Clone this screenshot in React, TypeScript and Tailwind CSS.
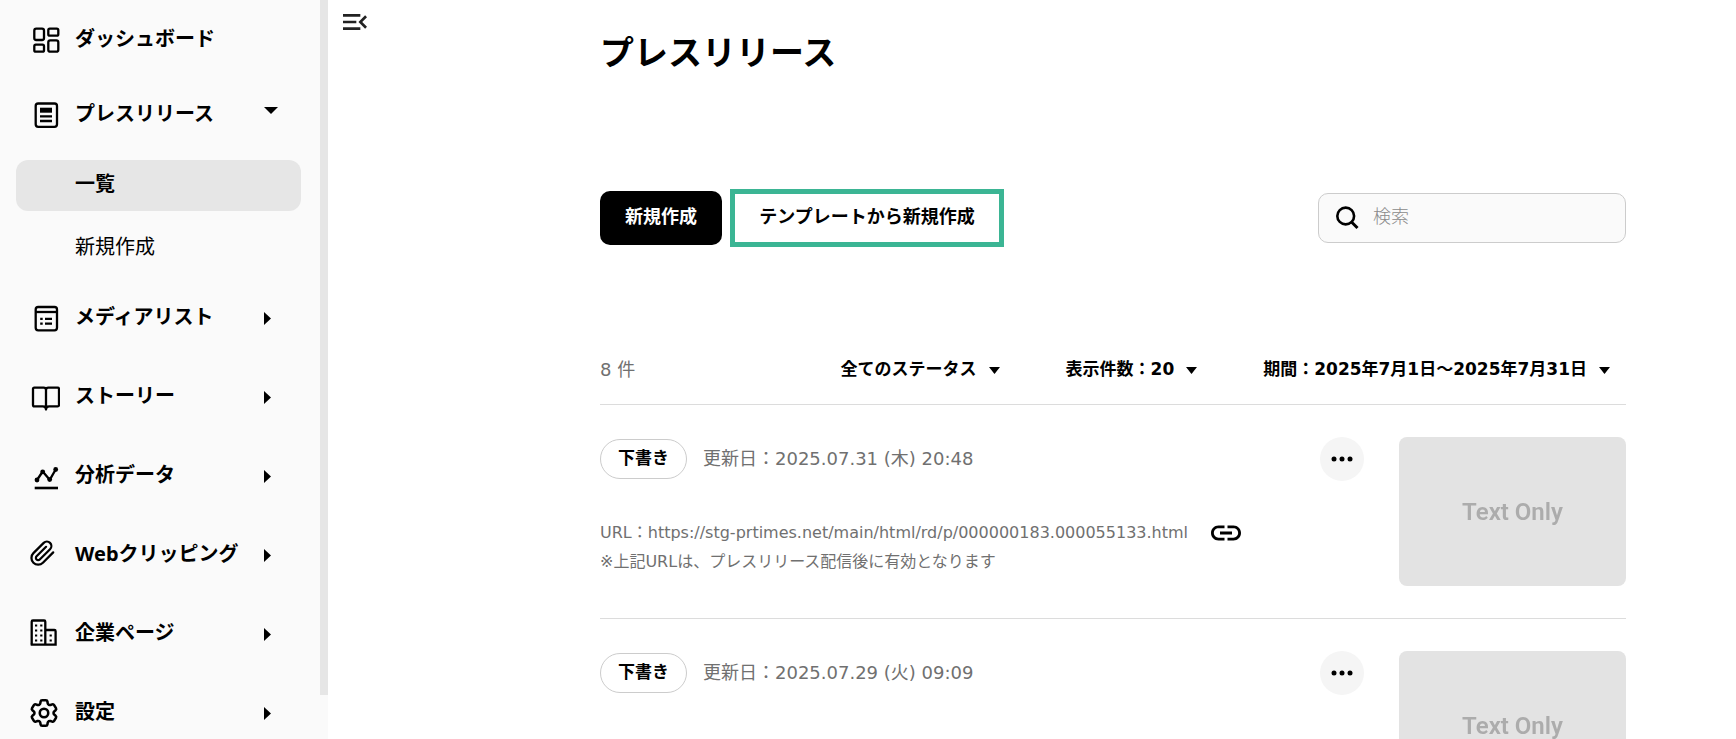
import { useState } from "react";
import type { ReactNode } from "react";
import { MdLink, MdMenuOpen } from "react-icons/md";
import { HiOutlineCog6Tooth } from "react-icons/hi2";

type NavItem = {
  label: string;
  icon: ReactNode;
};

type Release = {
  id: number;
  status: string;
  updatedAt: string;
  url?: string;
};

const releases: Release[] = [
  {
    id: 1,
    status: "下書き",
    updatedAt: "2025.07.31 (木) 20:48",
    url: "https://stg-prtimes.net/main/html/rd/p/000000183.000055133.html",
  },
  {
    id: 2,
    status: "下書き",
    updatedAt: "2025.07.29 (火) 09:09",
  },
];

const Icon = ({ children }: { children: ReactNode }) => (
  <svg
    className="h-8 w-8 shrink-0"
    viewBox="0 0 32 32"
    fill="none"
    stroke="currentColor"
    strokeWidth="2.3"
    aria-hidden="true"
  >
    {children}
  </svg>
);

const DashboardIcon = () => (
  <Icon>
    <rect x="6.3" y="4.7" width="9.7" height="11.3" rx="2" />
    <rect x="20.3" y="4.7" width="10" height="7" rx="1.5" />
    <rect x="6.3" y="20.7" width="9.7" height="7" rx="1.5" />
    <rect x="20.3" y="16.3" width="10" height="11.4" rx="2" />
  </Icon>
);

const ReleaseIcon = () => (
  <Icon>
    <rect x="7.7" y="4.5" width="21.3" height="23.3" rx="2.5" />
    <path d="M12 11.2h12" strokeWidth="5" />
    <path d="M12 17.3h12M12 22h12" />
  </Icon>
);

const MediaIcon = () => (
  <Icon>
    <rect x="7.7" y="4" width="21.3" height="23.3" rx="2.5" />
    <path d="M7.7 9h21.3" />
    <path d="M12.2 15.8h2.5M12.2 20.6h2.5M17 15.8h7M17 20.6h7" />
  </Icon>
);

const StoryIcon = () => (
  <Icon>
    <path
      d="M18 27.5V8c0-1.5-1-2.3-2.4-2.3H6.4c-.8 0-1.4.6-1.4 1.4V23c0 .8.6 1.4 1.4 1.4h8.4c1.8 0 3.2 1.2 3.2 3.1 0-1.9 1.4-3.1 3.2-3.1h8.4c.8 0 1.4-.6 1.4-1.4V7.1c0-.8-.6-1.4-1.4-1.4h-9.2C19 5.7 18 6.5 18 8"
      strokeLinecap="round"
      strokeLinejoin="round"
    />
  </Icon>
);

const AnalyticsIcon = () => (
  <Icon>
    <path d="M9 19l5.7-8.5 7 8.3 6-10.3" strokeLinejoin="round" />
    <g fill="currentColor" stroke="none">
      <circle cx="9" cy="19" r="2.4" />
      <circle cx="14.7" cy="10.8" r="2.4" />
      <circle cx="21.7" cy="18.6" r="2.4" />
      <circle cx="27.7" cy="8.5" r="2.4" />
    </g>
    <path d="M6.7 27h23.3" strokeWidth="2.6" />
  </Icon>
);

const ClipIcon = () => (
  <Icon>
    <g transform="translate(1.2 0) scale(1.12)" strokeWidth="2">
      <path
        d="M21.44 11.05l-9.19 9.19a6 6 0 0 1-8.49-8.49l9.19-9.19a4 4 0 0 1 5.66 5.66l-9.2 9.19a2 2 0 0 1-2.83-2.83l8.49-8.48"
        strokeLinecap="round"
        strokeLinejoin="round"
      />
    </g>
  </Icon>
);

const CompanyIcon = () => (
  <Icon>
    <path d="M3.7 25.6V2.7c0-.7.5-1.2 1.2-1.2h11.2c.7 0 1.2.5 1.2 1.2v22.9" />
    <path d="M17.3 11h9.1c.7 0 1.2.5 1.2 1.2v13.4H2.7" />
    <path
      d="M7 6.5h2.2M12.2 6.5h2.2M7 11.5h2.2M12.2 11.5h2.2M7 16.5h2.2M12.2 16.5h2.2M7 21.5h2.2M12.2 21.5h2.2M21.6 16.5h2.2M21.6 21.5h2.2"
      strokeWidth="2.2"
    />
  </Icon>
);

const SettingsIcon = () => (
  <span className="flex h-8 w-8 shrink-0 items-center justify-center pb-0.5">
    <HiOutlineCog6Tooth className="h-[34px] w-[34px] shrink-0" strokeWidth={1.8} />
  </span>
);

const SearchIcon = () => (
  <svg
    className="h-6 w-6 shrink-0"
    viewBox="0 0 24 24"
    fill="none"
    stroke="currentColor"
    strokeWidth="2.6"
    aria-hidden="true"
  >
    <circle cx="10.7" cy="10" r="8.4" />
    <path d="M16.5 16l6 6" strokeWidth="3" />
  </svg>
);

const navItems: NavItem[] = [
  { label: "メディアリスト", icon: <MediaIcon /> },
  { label: "ストーリー", icon: <StoryIcon /> },
  { label: "分析データ", icon: <AnalyticsIcon /> },
  { label: "Webクリッピング", icon: <ClipIcon /> },
  { label: "企業ページ", icon: <CompanyIcon /> },
  { label: "設定", icon: <SettingsIcon /> },
];

const CaretDown = ({ className }: { className: string }) => (
  <svg className={className} viewBox="0 0 14 8" fill="currentColor" preserveAspectRatio="none" aria-hidden="true">
    <path d="M0 0h14L7 8z" />
  </svg>
);

const CaretRight = () => (
  <svg className="h-[13px] w-[7px]" viewBox="0 0 7 13" fill="currentColor" aria-hidden="true">
    <path d="M0 0v13l7-6.5z" />
  </svg>
);

const Sidebar = () => {
  const [open, setOpen] = useState(true);

  return (
    <aside className="flex w-[328px] shrink-0 bg-[#fafafa]">
      <nav className="flex-1 overflow-hidden">
        <a href="#dashboard" className="flex h-20 items-center gap-[15px] pl-7">
          <DashboardIcon />
          <span className="pb-0.5 text-xl font-bold">ダッシュボード</span>
        </a>
        <button
          type="button"
          className="flex h-[69px] w-full items-center gap-[15px] pr-[42px] pl-7"
          onClick={() => setOpen(!open)}
        >
          <ReleaseIcon />
          <span className="flex-1 pb-0.5 text-left text-xl font-bold">プレスリリース</span>
          <CaretDown className="mb-2 h-[7px] w-[14px]" />
        </button>

        {/* Sub menu */}
        {open && (
          <div className="pt-[11px]">
            <a
              href="#list"
              className="mr-[19px] ml-4 flex h-[51px] items-center rounded-xl bg-[#e6e6e6] pb-1 pl-[59px] text-xl font-bold"
            >
              一覧
            </a>
            <a href="#new" className="flex h-[68px] items-center pt-1 pl-[75px] text-xl">
              新規作成
            </a>
          </div>
        )}

        {navItems.map((item) => (
          <button
            key={item.label}
            type="button"
            className="flex h-[79px] w-full items-center gap-[15px] pr-[49px] pl-7"
          >
            {item.icon}
            <span className="flex-1 pb-1 text-left text-xl font-bold whitespace-nowrap">
              {item.label}
            </span>
            <CaretRight />
          </button>
        ))}
      </nav>
      <div className="h-[94%] w-2 bg-[#e6e6e6]" />
    </aside>
  );
};

const FilterButton = ({ label }: { label: string }) => (
  <button
    type="button"
    className="flex items-center gap-3 font-['DejaVu_Sans','Noto_Sans_CJK_JP',sans-serif] text-[17px] font-bold whitespace-nowrap"
  >
    {label}
    <CaretDown className="h-[7px] w-[11px]" />
  </button>
);

const ReleaseRow = ({ release }: { release: Release }) => (
  <li className="flex border-t border-[#dcdcdc] py-8">
    <div className="flex-1">
      <div className="flex h-11 items-center gap-4">
        <span className="flex h-10 w-[87px] items-center justify-center rounded-full border border-[#ccc] pb-0.5 text-[17px] font-bold">
          {release.status}
        </span>
        <span className="font-['DejaVu_Sans','Noto_Sans_CJK_JP',sans-serif] text-lg text-[#707070]">
          更新日：{release.updatedAt}
        </span>
      </div>
      {release.url && (
        <div className="mt-[37px] font-['DejaVu_Sans','Noto_Sans_CJK_JP',sans-serif] text-base leading-[29px] text-[#707070]">
          <div className="flex items-center gap-5">
            <span>URL：{release.url}</span>
            <button type="button" className="text-black" aria-label="URLをコピー">
              <MdLink className="-my-1 h-9 w-9" />
            </button>
          </div>
          <p>※上記URLは、プレスリリース配信後に有効となります</p>
        </div>
      )}
    </div>
    <button
      type="button"
      className="mr-[35px] flex h-11 w-11 items-center justify-center rounded-full bg-[#f5f5f5]"
      aria-label="メニュー"
    >
      <svg className="h-[6px] w-[22px]" viewBox="0 0 22 6" fill="currentColor" aria-hidden="true">
        <circle cx="3" cy="3" r="2.5" />
        <circle cx="11" cy="3" r="2.5" />
        <circle cx="19" cy="3" r="2.5" />
      </svg>
    </button>
    <div className="flex h-[149px] w-[227px] items-center justify-center rounded-lg bg-[#e3e3e3]">
      <span className="font-[Roboto,sans-serif] text-2xl font-semibold text-[#acacac] blur-[0.5px]">
        Text Only
      </span>
    </div>
  </li>
);

const App = () => {
  const [search, setSearch] = useState("");

  return (
    <div className="flex h-screen overflow-hidden bg-white font-['Noto_Sans','Noto_Sans_CJK_JP',sans-serif] text-black">
      <Sidebar />

      <div className="w-[272px] shrink-0 pt-[6px] pl-[11px]">
        <button type="button" className="block text-[#222]" aria-label="メニューを閉じる">
          <MdMenuOpen className="h-8 w-8" />
        </button>
      </div>

      <main className="mr-[110px] min-w-0 flex-1">
        <h1 className="pt-[25px] text-[34px] leading-[54px] font-bold">プレスリリース</h1>

        <div className="mt-[110px] flex items-center">
          <button
            type="button"
            className="h-[54px] w-[122px] rounded-[10px] bg-black pb-1 text-lg font-bold text-white"
          >
            新規作成
          </button>
          <div className="ml-2 border-5 border-[#3bb594]">
            <button
              type="button"
              className="block h-12 w-[264px] rounded-lg pb-1 text-lg font-bold"
            >
              テンプレートから新規作成
            </button>
          </div>
          <label className="ml-auto flex h-[50px] w-[308px] items-center gap-[14px] rounded-[10px] border border-[#ccc] bg-[#fafafa] pl-4">
            <SearchIcon />
            <input
              type="search"
              className="w-full min-w-0 pb-1 text-lg font-light outline-none placeholder:text-[#8a8a8a]"
              placeholder="検索"
              aria-label="検索"
              value={search}
              onChange={(e) => setSearch(e.target.value)}
            />
          </label>
        </div>

        {/* Result count and filters */}
        <div className="mt-[89px] flex h-[68px] items-center pr-4">
          <p className="font-['DejaVu_Sans','Noto_Sans_CJK_JP',sans-serif] text-lg text-[#707070]">
            8 件
          </p>
          <div className="ml-auto flex gap-[66px]">
            <FilterButton label="全てのステータス" />
            <FilterButton label="表示件数：20" />
            <FilterButton label="期間：2025年7月1日～2025年7月31日" />
          </div>
        </div>

        <ul>
          {releases.map((release) => (
            <ReleaseRow key={release.id} release={release} />
          ))}
        </ul>
      </main>
    </div>
  );
};

export default App;
